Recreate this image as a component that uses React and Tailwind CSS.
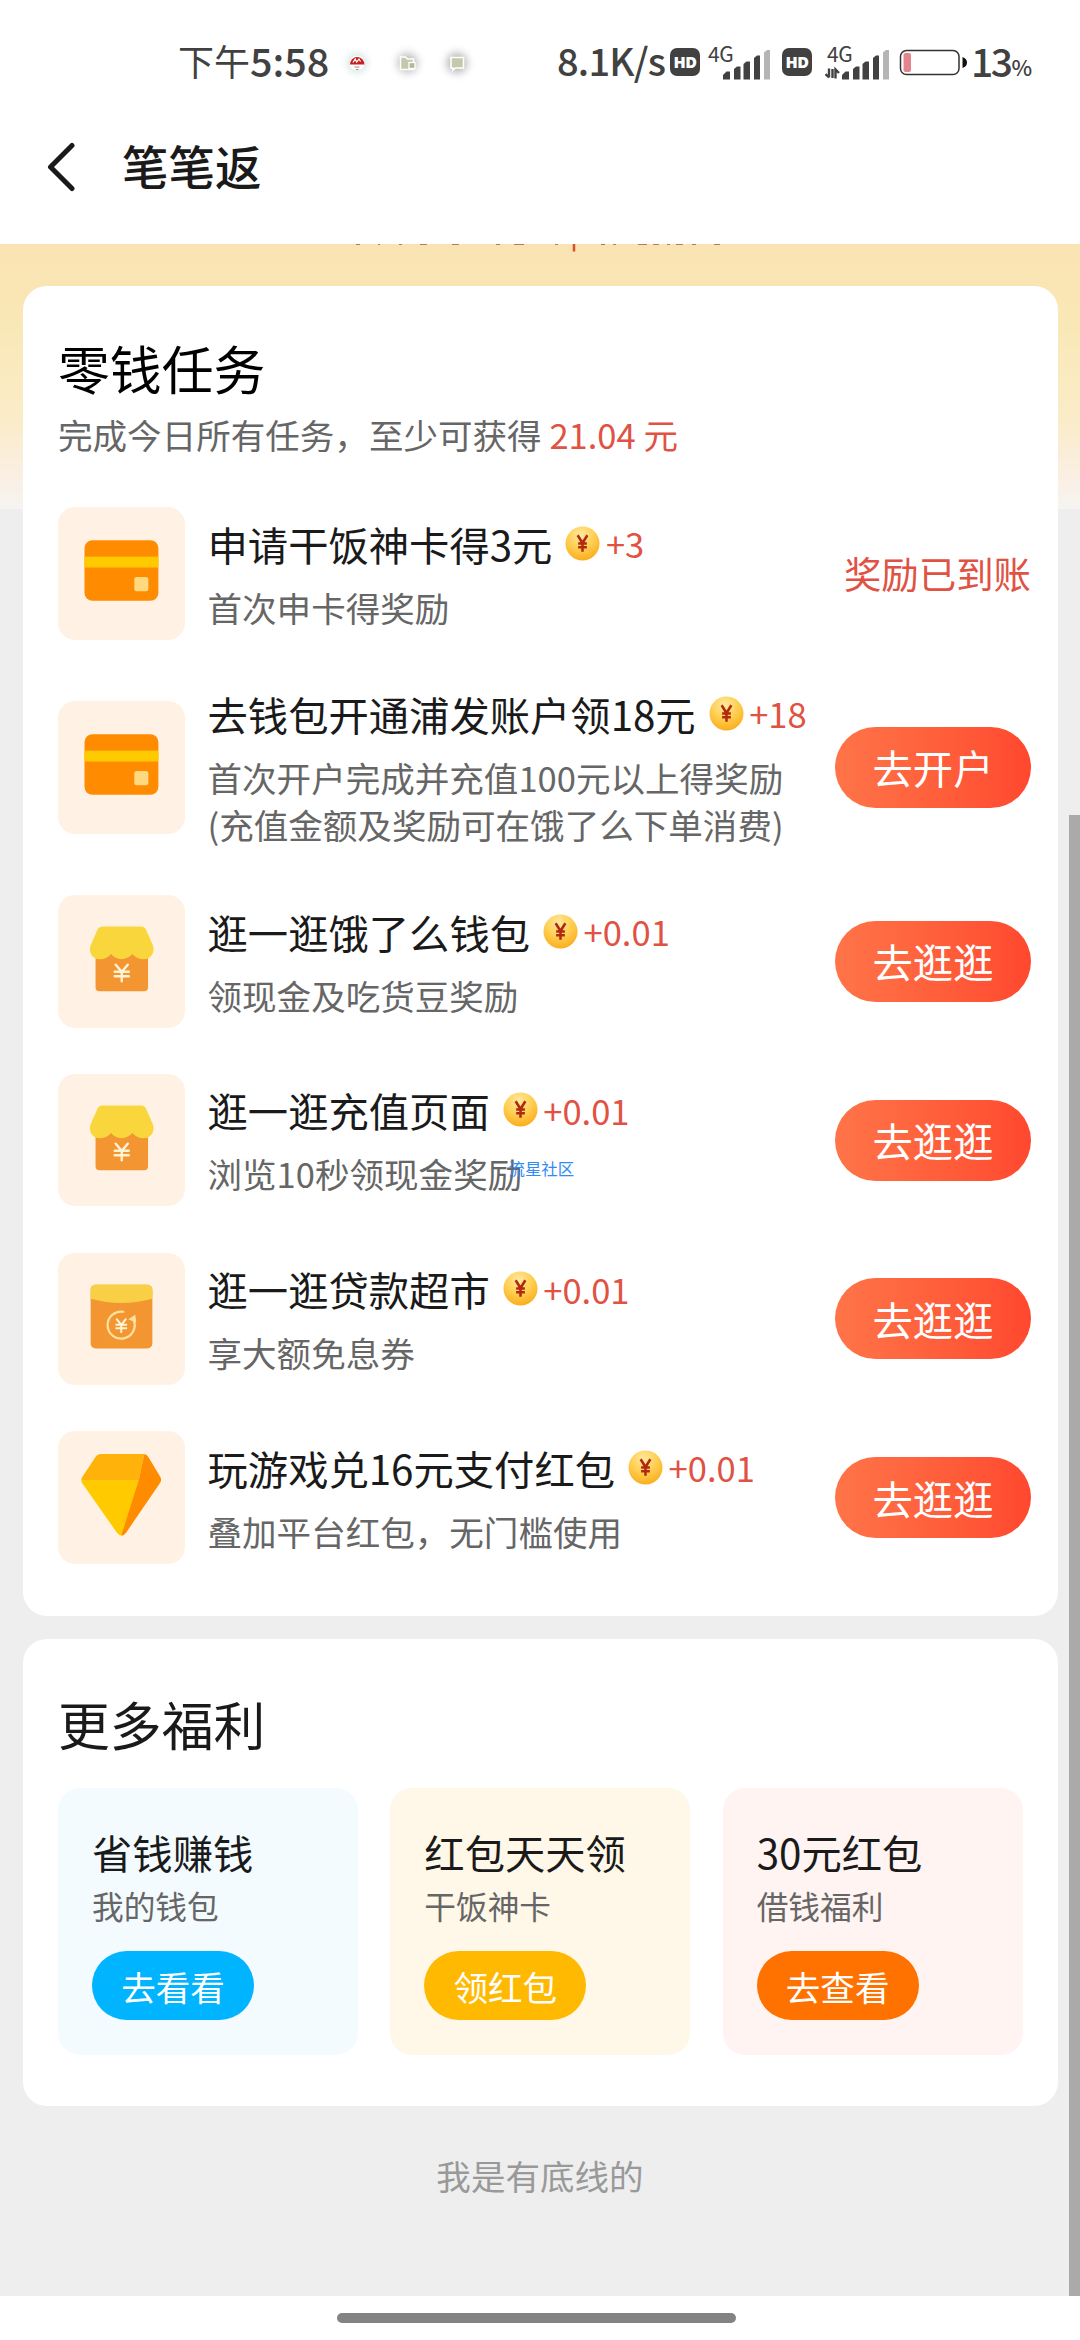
import React from 'react';
import clsx from 'clsx';

const CardIcon = () => (
  <svg viewBox="0 0 126 132" className="w-full h-full">
    <rect x="26.4" y="33" width="73.6" height="60.5" rx="8" fill="#ff8c00" />
    <rect x="26.4" y="49.5" width="73.6" height="10.8" fill="#ffcb00" />
    <rect x="76" y="69.8" width="14" height="14.2" rx="2.5" fill="#ffd980" />
  </svg>
);

const ShopIcon = () => (
  <svg viewBox="0 0 126 132" className="w-full h-full">
    <path d="M37.4 56H89.7V92a4 4 0 0 1-4 4H41.4a4 4 0 0 1-4-4Z" fill="#f39530" />
    <path
      d="M44 31.3H83a5 5 0 0 1 4.400 2.600L94.500 50c2.400 6.500-1.400 14-9 14-4.500 0-8.500-1.600-11.500-5.200C71 62 67.500 64 63.300 64S55.500 62 53 58.800C50 62.400 46 64 41.500 64c-7.600 0-11.400-7.500-9-14L39.600 33.900A5 5 0 0 1 44 31.300Z"
      fill="#f9d73c"
    />
    <path
      d="M57.500 69.500l6 7 6-7M63.500 76.500V86M56.500 76.500h14M56.500 81h14"
      fill="none"
      stroke="#fff3d6"
      strokeWidth="2.400"
      strokeLinecap="round"
    />
  </svg>
);

const LoanIcon = () => (
  <svg viewBox="0 0 126 132" className="w-full h-full">
    <rect x="32.5" y="31.700" width="61.500" height="63.500" rx="5" fill="#f39530" />
    <path d="M37.500 31.700H89a5 5 0 0 1 5 5V45.500Q63 54 32.500 45.500V36.700a5 5 0 0 1 5-5Z" fill="#f9cf45" />
    <path
      d="M65 58.500A13.500 13.500 0 1 0 75.300 66.500"
      fill="none"
      stroke="#ffe2a0"
      strokeWidth="2.200"
      strokeLinecap="round"
    />
    <path d="M70 66L77 61.500L78 69.500Z" fill="#ffe2a0" />
    <path
      d="M58.500 66l4.500 5.500 4.500-5.500M63 71.500V79M58 71.500h10M58 75h10"
      fill="none"
      stroke="#fff3d6"
      strokeWidth="2"
      strokeLinecap="round"
    />
  </svg>
);

const DiamondIcon = () => (
  <svg viewBox="0 0 126 132" className="w-full h-full">
    <path d="M42.500 23H86L80.400 49.500H23.500Q22.800 48 24 46L37 26.500Q39.200 23 42.500 23Z" fill="#ffb20a" />
    <path d="M23.300 49H80.600L65 104Q61.500 105 58.500 101L24.500 52.500Q23.300 51 23.300 49Z" fill="#ffcb00" />
    <path d="M86 23Q88.500 23.400 90 26L101.800 45.500Q103.600 48.500 101.800 51.500L68 101Q66 104 63 104.200L80.400 49Z" fill="#ff8c00" />
  </svg>
);

const Coin = () => (
  <svg viewBox="0 0 36 36" className="w-[35px] h-[35px] shrink-0">
    <defs>
      <radialGradient id="coin" cx="0.45" cy="0.25" r="0.75">
        <stop offset="0" stopColor="#ffe9a0" />
        <stop offset="0.5" stopColor="#ffd054" />
        <stop offset="1" stopColor="#fbae1e" />
      </radialGradient>
    </defs>
    <circle cx="18" cy="18" r="17.5" fill="url(#coin)" />
    <path
      d="M13 9.500L18 17.500L23 9.500M18 17.500V26.500M13.500 18h9M13.500 21.800h9"
      fill="none"
      stroke="#b02a12"
      strokeWidth="2.600"
    />
  </svg>
);

const tasks = [
  { title: '申请干饭神卡得3元', reward: '+3', desc: ['首次申卡得奖励'], icon: CardIcon, done: '奖励已到账' },
  {
    title: '去钱包开通浦发账户领18元',
    reward: '+18',
    desc: ['首次开户完成并充值100元以上得奖励', '(充值金额及奖励可在饿了么下单消费)'],
    icon: CardIcon,
    action: '去开户'
  },
  { title: '逛一逛饿了么钱包', reward: '+0.01', desc: ['领现金及吃货豆奖励'], icon: ShopIcon, action: '去逛逛' },
  {
    title: '逛一逛充值页面',
    reward: '+0.01',
    desc: ['浏览10秒领现金奖励'],
    icon: ShopIcon,
    action: '去逛逛',
    mark: '流星社区'
  },
  { title: '逛一逛贷款超市', reward: '+0.01', desc: ['享大额免息券'], icon: LoanIcon, action: '去逛逛' },
  { title: '玩游戏兑16元支付红包', reward: '+0.01', desc: ['叠加平台红包，无门槛使用'], icon: DiamondIcon, action: '去逛逛' }
];

const benefits = [
  { title: '省钱赚钱', desc: '我的钱包', action: '去看看', bg: 'bg-[#f3fbff]', button: 'bg-[#00b4ff]' },
  { title: '红包天天领', desc: '干饭神卡', action: '领红包', bg: 'bg-[#fff8e8]', button: 'bg-[#ffb900]' },
  { title: '30元红包', desc: '借钱福利', action: '去查看', bg: 'bg-[#fff4f1]', button: 'bg-[#ff7200]' }
];

const HdBadge = () => (
  <span className="w-[30px] h-[28px] rounded-[7px] bg-[#414141] text-white text-[16px] leading-[28px] font-extrabold text-center font-['Open_Sans',sans-serif] tracking-[-0.5px]">
    HD
  </span>
);

const Signal = ({ data }) => (
  <div className="relative w-[64px] h-[36px]">
    <span className="absolute left-[2px] top-[-2px] text-[21px] leading-[22px] tracking-[-0.3px]">4G</span>
    <svg viewBox="0 0 64 36" className="w-full h-full">
      {data && (
        <path
          d="M4 24.500V33.500M0.500 30L4 33.500M10.500 34.500V25.500L14 29M7.500 25v9"
          stroke="#414141"
          strokeWidth="2.400"
          fill="none"
        />
      )}
      <path d="M17 35.500V31l3.500-3.500H24V35.500Z" fill="#414141" />
      <path d="M28 35.500V25l3-2.500h3.500V35.500Z" fill="#414141" />
      <path d="M37.500 35.500V20l3-2.500H44V35.500Z" fill="#414141" />
      <path d="M48 35.500V14l3-2.500h3V35.500Z" fill="#414141" />
      <path d="M58 35.500V8.500l3-2.500h3V35.500Z" fill="#b5b5b5" />
    </svg>
  </div>
);

const StatusBar = () => (
  <div className="h-[90px] pt-[36px] flex items-start text-[#414141]">
    <div className="flex items-center h-[52px] pl-[178px] w-[557px] shrink-0 whitespace-nowrap">
      <div className="flex items-center w-[153px] shrink-0 pb-[4px]">
        <span className="text-[36px] leading-none">下午</span>
        <span className="text-[39.500px] leading-none font-medium">5:58</span>
      </div>
      <svg viewBox="0 0 140 40" className="w-[140px] h-10 ml-[6px]">
        <defs>
          <filter id="soft" x="-80%" y="-80%" width="260%" height="260%">
            <feGaussianBlur stdDeviation="4" />
          </filter>
        </defs>
        <circle cx="20" cy="21" r="9" fill="#c9dcdc" filter="url(#soft)" />
        <circle cx="20" cy="21" r="7.500" fill="#fff" />
        <path d="M13 22.500a7.200 7.500 0 1 1 14.400 0Z" fill="#c62020" />
        <path d="M16 20.500l2.200-3.500 1.500 3 2.300-3 1.500 2.500" stroke="#fff" strokeWidth="1.200" fill="none" />
        <path d="M17.500 25h5M19 27.500h2.500" stroke="#b98080" strokeWidth="1" />
        <circle cx="70.500" cy="21" r="10" fill="#8c8c8c" opacity="0.600" filter="url(#soft)" />
        <path d="M63.500 15h5l2 2h6v10.500h-13Z" fill="#c6c8ab" stroke="#fff" strokeWidth="1.500" />
        <rect x="72" y="20.500" width="6" height="6" fill="#b5b79a" stroke="#fff" strokeWidth="1.300" />
        <circle cx="120" cy="21" r="10" fill="#8c8c8c" opacity="0.700" filter="url(#soft)" />
        <path d="M114 15.500h12.500v10.500h-8l-2.500 2v-2h-2Z" fill="#c6c8ab" stroke="#fff" strokeWidth="1.600" />
      </svg>
    </div>
    <div className="flex items-center h-[52px] shrink-0 whitespace-nowrap">
      <span className="text-[38px] leading-none w-[113px] tracking-[-0.800px] pb-[4px] font-medium">8.1K/s</span>
      <HdBadge />
      <div className="ml-[6px]"><Signal /></div>
      <div className="ml-[12px] flex"><HdBadge /></div>
      <div className="ml-[13px]"><Signal data /></div>
      <svg viewBox="0 0 70 28" className="w-[70px] h-7 ml-[10px]">
        <rect x="1.500" y="2.500" width="58.500" height="24" rx="6" fill="none" stroke="#333" strokeWidth="1.500" />
        <rect x="4.500" y="5" width="7.500" height="19" rx="2" fill="#e3858f" />
        <path d="M63.500 9v11q4.500-1.500 4.500-5.500t-4.500-5.500Z" fill="#111" />
      </svg>
      <span className="text-[39px] leading-none ml-[2px] tracking-[-2.500px] pb-[4px] font-medium">13</span>
      <span className="text-[22px] leading-none pt-[7px] ml-[1px] font-medium">%</span>
    </div>
  </div>
);

const TaskRow = ({ task }) => (
  <div className="flex items-center">
    <div className="w-[126.500px] h-[132.500px] rounded-[17px] bg-[#fff2e4] shrink-0">
      <task.icon />
    </div>
    <div className="relative ml-[23px] flex-1 whitespace-nowrap">
      <div className="flex items-center h-[56px]">
        <span className="text-[40.320px] leading-[56px] text-[#1a1a1a]">{task.title}</span>
        <div className="flex items-center ml-[13px] pb-[1px]">
          <Coin />
          <span className="ml-[5.500px] text-[34.560px] leading-[50px] text-[#e05244]">{task.reward}</span>
        </div>
      </div>
      <div className="mt-[12px] text-[34.560px] leading-[47.500px] text-[#666]">
        {task.desc.map((line) => (
          <p key={line}>{line}</p>
        ))}
      </div>
      {task.mark && (
        <span className="absolute left-[301px] top-[76px] text-[16.400px] leading-[20px] text-[#2f8bf7]">{task.mark}</span>
      )}
    </div>
    {task.done ? (
      <span className="text-[37.440px] leading-[52px] text-[#e05244]">{task.done}</span>
    ) : (
      <button className="w-[196px] h-[81px] rounded-full bg-gradient-to-r from-[#ff7448] to-[#ff482f] text-white text-[40.320px] leading-[78px]">
        {task.action}
      </button>
    )}
  </div>
);

const App = () => {
  return (
    <div className="relative w-[1080px] h-[2340px] overflow-hidden bg-white flex flex-col font-['Noto_Sans_CJK_SC',sans-serif]">
      <StatusBar />

      {/* Title bar */}
      <div className="h-[154px] flex items-center pl-[45px]">
        <svg viewBox="0 0 32 50" className="w-8 h-[50px]">
          <path
            d="M27 3.500L5.500 25L27 46.500"
            fill="none"
            stroke="#1a1a1a"
            strokeWidth="5"
            strokeLinecap="round"
            strokeLinejoin="round"
          />
        </svg>
        <h1 className="ml-[45px] text-[46.500px] leading-[60px] font-medium text-[#1a1a1a] pb-[5px]">笔笔返</h1>
      </div>

      <div className="h-[2052px] bg-[#eee]">
        <div className="h-[265px] -mb-[265px] bg-[linear-gradient(180deg,#fae3b2_0%,#f9e8b6_30%,#faecc8_66%,#faefe4_88%,#f5f4f0_100%)]">
          {/* Lower edge of the banner line scrolled under the title bar */}
          <svg viewBox="0 0 380 10" className="w-[380px] h-[10px] ml-[350px]">
            <path
              d="M6 0.400h4M28 0.400h2M49 0.400h3M70 0.400h7M102 0.400h7M146 0.400h4M164 0.400h10M205 0.400h3M251 0.400h4M263 0.400h3M288 0.400h9M303 0.400h6M317 0.400h3M326 0.400h7M342 0.400h4M364 0.400h6"
              stroke="#a5633d"
              strokeWidth="0.900"
            />
            <path d="M224 0V7.500" stroke="#d5502e" strokeWidth="2.500" />
          </svg>
        </div>

        <div className="relative pt-[42px] pl-[23px] pr-[22px]">
          {/* Tasks */}
          <div className="h-[1330px] rounded-[24px] bg-white pt-[46px] pl-[35px] pr-[27px]">
            <h2 className="text-[51.840px] leading-[72px] text-black">零钱任务</h2>
            <p className="mt-[4px] text-[34.560px] leading-[52px] text-[#666]">
              完成今日所有任务，至少可获得 <span className="text-[#e05244]">21.04 元</span>
            </p>
            <div className="mt-[47px] flex flex-col gap-[46.300px]">
              {tasks.map((task) => (
                <TaskRow key={task.title} task={task} />
              ))}
            </div>
          </div>

          {/* More benefits */}
          <div className="mt-[23px] h-[467px] rounded-[24px] bg-white pt-[49px] pl-[35px] pr-[35.500px]">
            <h2 className="text-[51.840px] leading-[72px] text-[#1a1a1a]">更多福利</h2>
            <div className="mt-[28px] grid grid-cols-3 gap-[32.500px]">
              {benefits.map((item) => (
                <div key={item.title} className={clsx('h-[267px] rounded-[22px] pt-[36px] pl-[34px]', item.bg)}>
                  <h3 className="text-[40.320px] leading-[56px] text-[#1a1a1a]">{item.title}</h3>
                  <p className="mt-[3px] text-[31.680px] leading-[44px] text-[#666]">{item.desc}</p>
                  <button className={clsx('mt-[24px] w-[162px] h-[69px] rounded-full text-white text-[34.560px] leading-[66px]', item.button)}>
                    {item.action}
                  </button>
                </div>
              ))}
            </div>
          </div>
        </div>

        <p className="mt-[45px] text-center text-[34.560px] leading-[48px] text-[#999]">我是有底线的</p>
      </div>

      {/* Home indicator */}
      <div className="h-[44px] pt-[17px] pl-[337px]">
        <div className="w-[399px] h-[10px] rounded-full bg-[#838383]"></div>
      </div>

      {/* Scrollbar */}
      <div className="absolute right-0 top-[815px] w-[11px] h-[1481px] bg-[#aaa]"></div>
    </div>
  );
};

export default App;
